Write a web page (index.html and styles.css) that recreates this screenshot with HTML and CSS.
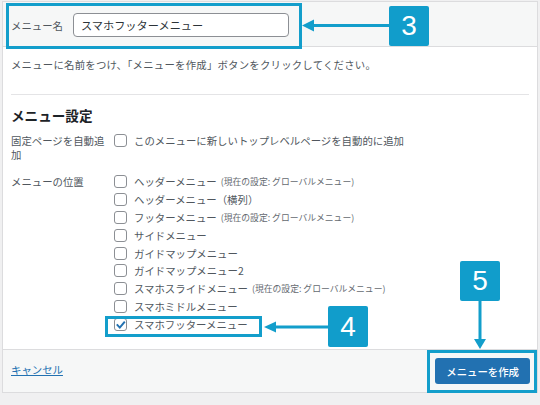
FILE: index.html
```html
<!DOCTYPE html>
<html lang="ja">
<head>
    <meta charset="UTF-8">
    <meta name="viewport" content="width=device-width, initial-scale=1.0">
    <title>メニューを作成</title>
    <link rel="stylesheet" href="styles.css">
</head>
<body>
    <div class="screen">
        <div class="menu-panel">
            <div class="menu-header">
                <label class="menu-name-label" for="menu-name">メニュー名</label>
                <input id="menu-name" class="menu-name" type="text" value="スマホフッターメニュー">
            </div>

            <div class="menu-body">
                <p class="menu-help">メニューに名前をつけ、「メニューを作成」ボタンをクリックしてください。</p>
                <hr class="divider">

                <h3 class="settings-title">メニュー設定</h3>

                <div class="setting-row">
                    <div class="setting-label">固定ページを自動追加</div>
                    <ul class="check-list">
                        <li><span class="check"></span>このメニューに新しいトップレベルページを自動的に追加</li>
                    </ul>
                </div>

                <div class="setting-row">
                    <div class="setting-label">メニューの位置</div>
                    <ul class="check-list">
                        <li><span class="check"></span>ヘッダーメニュー <span class="location-set">(現在の設定: グローバルメニュー)</span></li>
                        <li><span class="check"></span>ヘッダーメニュー（横列）</li>
                        <li><span class="check"></span>フッターメニュー <span class="location-set">(現在の設定: グローバルメニュー)</span></li>
                        <li><span class="check"></span>サイドメニュー</li>
                        <li><span class="check"></span>ガイドマップメニュー</li>
                        <li><span class="check"></span>ガイドマップメニュー2</li>
                        <li><span class="check"></span>スマホスライドメニュー <span class="location-set">(現在の設定: グローバルメニュー)</span></li>
                        <li><span class="check"></span>スマホミドルメニュー</li>
                        <li>
                            <span class="check checked">
                                <svg width="13" height="13" viewBox="0 0 13 13"><path d="M2.8 6.4 L5.8 9.6 L10.8 3.6" fill="none" stroke="#2271b1" stroke-width="2"/></svg>
                            </span>スマホフッターメニュー
                        </li>
                    </ul>
                </div>
            </div>

            <div class="menu-footer">
                <a class="cancel-link" href="#">キャンセル</a>
                <button class="btn-primary" type="button">メニューを作成</button>
            </div>
        </div>

        <!-- step callouts -->
        <div class="highlight hl-name"></div>
        <div class="highlight hl-location"></div>
        <div class="highlight hl-create"></div>

        <svg class="arrows" width="540" height="405" viewBox="0 0 540 405">
            <g fill="#139ecb" stroke="#139ecb">
                <line x1="312" y1="25.5" x2="390" y2="25.5" stroke-width="3"/>
                <polygon points="302,25.5 314,19.5 314,31.5" stroke="none"/>
                <line x1="273" y1="327" x2="329" y2="327" stroke-width="3"/>
                <polygon points="264,327 276,321.5 276,332.5" stroke="none"/>
                <line x1="480" y1="300" x2="480" y2="341" stroke-width="3"/>
                <polygon points="480,349 474,339 486,339" stroke="none"/>
            </g>
        </svg>

        <div class="step step-3">3</div>
        <div class="step step-4">4</div>
        <div class="step step-5">5</div>
    </div>
</body>
</html>
```

FILE: styles.css
```css
body {
    margin: 0;
    background-color: #f0f0f1;
    font-family: "Noto Sans CJK JP", "Noto Sans", sans-serif;
    color: #3c434a;
}
.screen {
    position: relative;
    width: 540px;
    height: 405px;
    overflow: hidden;
}
.menu-panel {
    margin: 1px 2px 0 2px;
    background-color: #fff;
    border: 1px solid #dcdcde;
}

/* header with the name field */
.menu-header {
    display: flex;
    align-items: center;
    gap: 10px;
    height: 45px;
    padding: 2px 8px 0;
    box-sizing: border-box;
    background-color: #f6f7f7;
    border-bottom: 1px solid #dcdcde;
}
.menu-name-label {
    font-size: 10.4px;
    color: #50575e;
}
.menu-name {
    width: 216px;
    height: 24px;
    box-sizing: border-box;
    padding: 0 7px;
    border: 1px solid #8c8f94;
    border-radius: 4px;
    font-family: inherit;
    font-size: 11.2px;
    color: #2c3338;
    background-color: #fff;
}

/* body */
.menu-body {
    padding: 0 8px 16px;
}
.menu-help {
    margin: 10px 0 21px;
    font-size: 10.4px;
    line-height: 16px;
    letter-spacing: 0.22px;
    color: #50575e;
}
.divider {
    margin: 0;
    border: 0;
    border-top: 1px solid #e4e4e6;
}
.settings-title {
    margin: 11px 0 7px;
    font-size: 13.6px;
    line-height: 19px;
    font-weight: bold;
    color: #1d2327;
}
.setting-row {
    display: flex;
    margin-bottom: 11px;
}
.setting-row:last-child {
    margin-bottom: 0;
}
.setting-label {
    width: 101px;
    flex: none;
    padding: 2px 2px 0 0;
    font-size: 10.4px;
    line-height: 14px;
    color: #50575e;
}
.check-list {
    margin: 0;
    padding: 0;
    list-style: none;
}
.check-list li {
    display: flex;
    align-items: center;
    height: 17.8px;
    font-size: 10.4px;
    color: #50575e;
    white-space: nowrap;
}
.check {
    display: inline-flex;
    width: 13px;
    height: 13px;
    box-sizing: border-box;
    margin-right: 7px;
    border: 1px solid #8c8f94;
    border-radius: 3px;
    background-color: #fff;
}
.check svg {
    margin: -1px;
}
.location-set {
    margin-left: 4px;
    font-size: 8.8px;
    color: #646970;
}

/* footer */
.menu-footer {
    display: flex;
    align-items: center;
    justify-content: space-between;
    height: 42px;
    padding: 0 7px 0 8px;
    background-color: #f6f7f7;
    border-top: 1px solid #dcdcde;
}
.cancel-link {
    font-size: 10.4px;
    color: #2271b1;
    text-decoration: underline;
    margin-top: -4px;
}
.btn-primary {
    height: 26px;
    padding: 0 11px;
    border: none;
    border-radius: 3px;
    background-color: #2271b1;
    color: #fff;
    font-family: inherit;
    font-size: 10.4px;
    font-weight: 500;
}

/* callouts drawn over the form */
.highlight {
    position: absolute;
    box-sizing: border-box;
    border: 3px solid #139ecb;
}
.hl-name {
    left: 6px;
    top: 3px;
    width: 296px;
    height: 46px;
}
.hl-location {
    left: 105px;
    top: 316px;
    width: 157px;
    height: 21px;
}
.hl-create {
    left: 427px;
    top: 350px;
    width: 110px;
    height: 43px;
}
.arrows {
    position: absolute;
    left: 0;
    top: 0;
    pointer-events: none;
}
.step {
    position: absolute;
    width: 40px;
    height: 40px;
    border-radius: 2px;
    background-color: #119dcb;
    color: #fff;
    font-family: "Liberation Sans", Arial, sans-serif;
    font-size: 28px;
    line-height: 40px;
    text-align: center;
}
.step-3 {
    left: 389px;
    top: 6px;
}
.step-4 {
    left: 328px;
    top: 306px;
    height: 41px;
    line-height: 41px;
}
.step-5 {
    left: 460px;
    top: 261px;
}
```
